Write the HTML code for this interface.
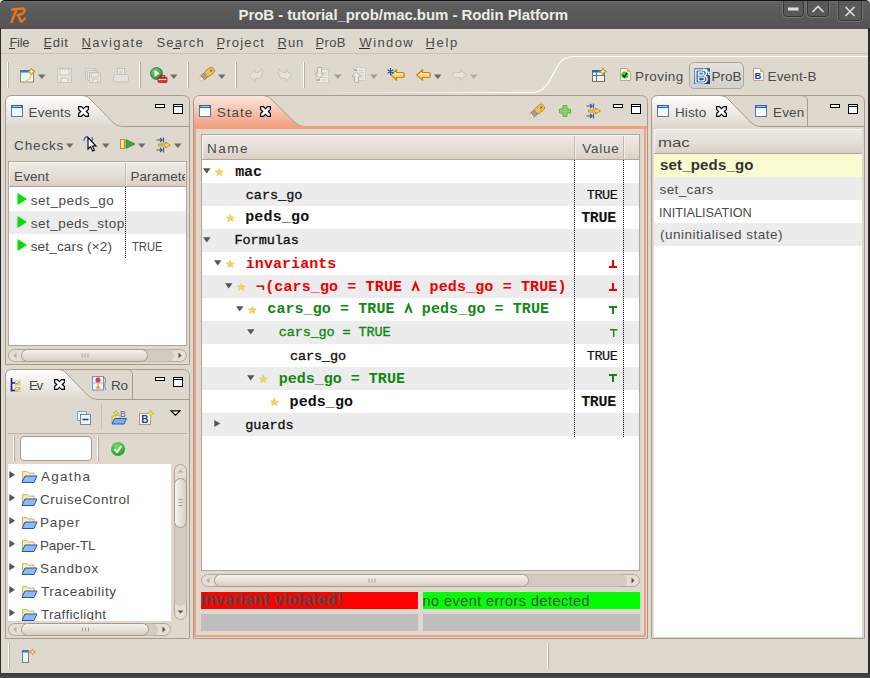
<!DOCTYPE html>
<html><head><meta charset="utf-8">
<style>
*{margin:0;padding:0;box-sizing:border-box}
html,body{width:870px;height:678px;overflow:hidden;background:#dfd8cf;font-family:"Liberation Sans",sans-serif;font-size:13px;color:#3c3c3c;position:relative}
.a{position:absolute}
.t{position:absolute;white-space:nowrap;line-height:1}
svg{display:block}
</style></head><body>
<div class="a" style="left:0px;top:0px;width:870px;height:29px;background:linear-gradient(#606060,#5a5a5a 40%,#525252);border-top:1px solid #111;border-radius:5px 5px 0 0"></div>
<div class="a" style="left:4px;top:1px;width:862px;height:1px;background:#6e6e6e"></div>
<div class="a" style="left:0px;top:28px;width:1px;height:650px;background:#2a2a2a"></div>
<div class="a" style="left:868px;top:28px;width:2px;height:650px;background:#2a2a2a"></div>
<div class="a" style="left:0px;top:673px;width:870px;height:5px;background:linear-gradient(#3a3a3a,#4a4a4a)"></div>
<svg class="a" style="left:782px;top:1px" width="23" height="17" viewBox="0 0 23 17"><rect x="0.5" y="-4" width="22" height="20.5" rx="4" fill="#5a5a5a" stroke="#767676"/><path d="M1.5 0 V12.5 Q1.5 15.5 4.5 15.5 H18.5 Q21.5 15.5 21.5 12.5 V0" fill="none" stroke="#363636"/><rect x="6" y="6.5" width="10.5" height="3" fill="#e0e0e0"/></svg>
<svg class="a" style="left:806px;top:1px" width="24" height="17" viewBox="0 0 24 17"><rect x="0.5" y="-4" width="23" height="20.5" rx="4" fill="#5a5a5a" stroke="#767676"/><path d="M1.5 0 V12.5 Q1.5 15.5 4.5 15.5 H19.5 Q22.5 15.5 22.5 12.5 V0" fill="none" stroke="#363636"/><path d="M6.5 11 L12 5.5 L17.5 11" fill="none" stroke="#e0e0e0" stroke-width="1.6"/></svg>
<svg class="a" style="left:837px;top:1px" width="26" height="21" viewBox="0 0 26 21"><rect x="0.5" y="-4" width="25" height="24.5" rx="4" fill="#5a5a5a" stroke="#767676"/><path d="M1.5 0 V16.5 Q1.5 19.5 4.5 19.5 H21.5 Q24.5 19.5 24.5 16.5 V0" fill="none" stroke="#363636"/><path d="M8.5 6 L17.5 15 M17.5 6 L8.5 15" fill="none" stroke="#e0e0e0" stroke-width="1.6"/></svg>
<svg class="a" style="left:9px;top:6px" width="18" height="19" viewBox="0 0 18 19"><path d="M3 3.5 L13 2.5 Q16.5 2.5 15.5 5.5 Q14 8.5 8.5 9.2 M7.5 3.5 L2.5 16 M9.5 9.5 L11.5 15 Q12.5 16.5 16 12.5" fill="none" stroke="#ec7417" stroke-width="2.4" stroke-linecap="round" stroke-linejoin="round"/></svg>
<div class="a" style="left:9px;top:48px;width:6px;height:1px;background:#333"></div>
<div class="a" style="left:44px;top:48px;width:7px;height:1px;background:#333"></div>
<div class="a" style="left:82px;top:48px;width:9px;height:1px;background:#333"></div>
<div class="a" style="left:173px;top:48px;width:7px;height:1px;background:#333"></div>
<div class="a" style="left:217px;top:48px;width:7px;height:1px;background:#333"></div>
<div class="a" style="left:278px;top:48px;width:8px;height:1px;background:#333"></div>
<div class="a" style="left:316px;top:48px;width:7px;height:1px;background:#333"></div>
<div class="a" style="left:359px;top:48px;width:11px;height:1px;background:#333"></div>
<div class="a" style="left:426px;top:48px;width:8px;height:1px;background:#333"></div>
<div class="a" style="left:1px;top:53px;width:867px;height:1px;background:#c9bfb3"></div>
<svg class="a" style="left:1px;top:54px" width="867" height="41" viewBox="0 0 867 41"><defs><linearGradient id="wl" gradientUnits="userSpaceOnUse" x1="310" y1="0" x2="520" y2="0"><stop offset="0" stop-color="#fff" stop-opacity="0"/><stop offset="1" stop-color="#fff"/></linearGradient></defs><path d="M0 38.5 L533 38.5 C540 38 545 33, 549 26 L556 13 C560 6, 565 2.5, 572 2.5 L867 2.5" fill="none" stroke="url(#wl)" stroke-width="1.2"/></svg>
<div class="a" style="left:7px;top:62px;width:1px;height:26px;background:#fff"></div>
<div class="a" style="left:8px;top:62px;width:1px;height:26px;background:#b9ad9f"></div>
<div class="a" style="left:139px;top:62px;width:1px;height:26px;background:#fff"></div>
<div class="a" style="left:140px;top:62px;width:1px;height:26px;background:#b9ad9f"></div>
<div class="a" style="left:187px;top:62px;width:1px;height:26px;background:#fff"></div>
<div class="a" style="left:188px;top:62px;width:1px;height:26px;background:#b9ad9f"></div>
<div class="a" style="left:235px;top:62px;width:1px;height:26px;background:#fff"></div>
<div class="a" style="left:236px;top:62px;width:1px;height:26px;background:#b9ad9f"></div>
<div class="a" style="left:303px;top:62px;width:1px;height:26px;background:#fff"></div>
<div class="a" style="left:304px;top:62px;width:1px;height:26px;background:#b9ad9f"></div>
<svg class="a" style="left:5px;top:95px" width="185" height="270" viewBox="0 0 185 270"><defs><linearGradient id="g5_95" x1="0" y1="0" x2="0" y2="1"><stop offset="0" stop-color="#ffffff"/><stop offset="1" stop-color="#dfd8cf"/></linearGradient></defs><path d="M0.5 31.5 L0.5 7 Q0.5 0.5 7 0.5 L75 0.5 C80 0.5 83 1.5 86 5 L106 25.5 C110 30.0 114 31.5 119 31.5 Z" fill="url(#g5_95)"/><path d="M0.5 269.5 L0.5 7 Q0.5 0.5 7 0.5 L177.5 0.5 Q184.5 0.5 184.5 7 L184.5 269.5 L0.5 269.5" fill="none" stroke="#a99b8c"/><path d="M75 0.5 C80 0.5 83 1.5 86 5 L106 25.5 C110 30.0 114 31.5 119 31.5 L184.5 31.5" fill="none" stroke="#a99b8c"/></svg>
<svg class="a" style="left:5px;top:369px" width="185" height="270" viewBox="0 0 185 270"><defs><linearGradient id="g5_369" x1="0" y1="0" x2="0" y2="1"><stop offset="0" stop-color="#ffffff"/><stop offset="1" stop-color="#dfd8cf"/></linearGradient></defs><path d="M0.5 30.5 L0.5 7 Q0.5 0.5 7 0.5 L51 0.5 C56 0.5 59 1.5 62 5 L81 24.5 C85 29.0 89 30.5 94 30.5 Z" fill="url(#g5_369)"/><path d="M0.5 269.5 L0.5 7 Q0.5 0.5 7 0.5 L177.5 0.5 Q184.5 0.5 184.5 7 L184.5 269.5 L0.5 269.5" fill="none" stroke="#a99b8c"/><path d="M51 0.5 C56 0.5 59 1.5 62 5 L81 24.5 C85 29.0 89 30.5 94 30.5 L184.5 30.5" fill="none" stroke="#a99b8c"/><path d="M127.5 30.5 L127.5 6 Q127.5 0.5 121.5 0.5" fill="none" stroke="#a99b8c"/></svg>
<svg class="a" style="left:193px;top:95px" width="455" height="544" viewBox="0 0 455 544"><defs><linearGradient id="g193_95" x1="0" y1="0" x2="0" y2="1"><stop offset="0" stop-color="#fbe8df"/><stop offset="1" stop-color="#f2a181"/></linearGradient></defs><path d="M0.5 31.5 L0.5 7 Q0.5 0.5 7 0.5 L68 0.5 C73 0.5 76 1.5 79 5 L100 25.5 C104 30.0 108 31.5 113 31.5 Z" fill="url(#g193_95)"/><path d="M0.5 543.5 L0.5 7 Q0.5 0.5 7 0.5 L447.5 0.5 Q454.5 0.5 454.5 7 L454.5 543.5 L0.5 543.5" fill="none" stroke="#a99b8c"/><path d="M68 0.5 C73 0.5 76 1.5 79 5 L100 25.5 C104 30.0 108 31.5 113 31.5 L454.5 31.5" fill="none" stroke="#a99b8c"/><path d="M2 31.5 L2 541 L452 541 L452 31.5" fill="none" stroke="#f3a07e" stroke-width="2"/><rect x="1" y="31.0" width="453" height="3" fill="#f3a07e"/></svg>
<svg class="a" style="left:651px;top:95px" width="214" height="544" viewBox="0 0 214 544"><defs><linearGradient id="g651_95" x1="0" y1="0" x2="0" y2="1"><stop offset="0" stop-color="#ffffff"/><stop offset="1" stop-color="#dfd8cf"/></linearGradient></defs><path d="M0.5 31.5 L0.5 7 Q0.5 0.5 7 0.5 L67 0.5 C72 0.5 75 1.5 78 5 L98 25.5 C102 30.0 106 31.5 111 31.5 Z" fill="url(#g651_95)"/><path d="M0.5 543.5 L0.5 7 Q0.5 0.5 7 0.5 L206.5 0.5 Q213.5 0.5 213.5 7 L213.5 543.5 L0.5 543.5" fill="none" stroke="#a99b8c"/><path d="M67 0.5 C72 0.5 75 1.5 78 5 L98 25.5 C102 30.0 106 31.5 111 31.5 L213.5 31.5" fill="none" stroke="#a99b8c"/><path d="M156.5 31.5 L156.5 6 Q156.5 0.5 150.5 0.5" fill="none" stroke="#a99b8c"/></svg>
<div class="a" style="left:8px;top:161px;width:179px;height:185px;background:#fff;border:1px solid #b3a699"></div>
<div class="a" style="left:9px;top:162px;width:177px;height:25px;background:linear-gradient(#eeeae5,#e3ddd5 60%,#d9d1c7);border-bottom:1px solid #b3a699;box-shadow:inset 1px 1px #f8f6f3"></div>
<div class="a" style="left:125px;top:163px;width:1px;height:23px;background:#c4b9ac"></div>
<div class="a" style="left:126px;top:163px;width:1px;height:23px;background:#f3f0ec"></div>
<div class="a" style="left:9px;top:211px;width:177px;height:23px;background:#ececec"></div>
<div class="a" style="left:125px;top:187px;width:1px;height:71px;background:repeating-linear-gradient(#000 0 1px,transparent 1px 2px)"></div>
<svg class="a" style="left:8px;top:349px" width="179" height="13" viewBox="0 0 179 13"><rect x="0.5" y="0.5" width="178" height="12" rx="6" fill="#e4ded7" stroke="#b3a699"/><rect x="13" y="0.5" width="153" height="12" rx="6" fill="#d3cac0" stroke="none"/><defs><linearGradient id="th8_349" x1="0" y1="0" x2="0" y2="1"><stop offset="0" stop-color="#f7f4f1"/><stop offset="1" stop-color="#d6cdc3"/></linearGradient></defs><rect x="13.5" y="0.5" width="126" height="12" rx="6" fill="url(#th8_349)" stroke="#a99b8c"/><path d="M74.0 4.5 v4 M77.0 4.5 v4 M80.0 4.5 v4" stroke="#a99b8c" stroke-width="1"/><path d="M8.5 3.5 L5.5 6.5 L8.5 9.5 Z" fill="#b9b1a8"/><path d="M170.5 3.5 L173.5 6.5 L170.5 9.5 Z" fill="#555"/></svg>
<div class="a" style="left:8px;top:433px;width:179px;height:1px;background:#bfb3a6"></div>
<div class="a" style="left:20px;top:436px;width:72px;height:25px;background:#fff;border:1px solid #a99b8c;border-radius:4px"></div>
<div class="a" style="left:13px;top:436px;width:1px;height:26px;background:#fff"></div>
<div class="a" style="left:14px;top:436px;width:1px;height:26px;background:#b9ad9f"></div>
<div class="a" style="left:97px;top:436px;width:1px;height:26px;background:#fff"></div>
<div class="a" style="left:98px;top:436px;width:1px;height:26px;background:#b9ad9f"></div>
<div class="a" style="left:8px;top:464px;width:163px;height:157px;background:#fff"></div>
<svg class="a" style="left:8px;top:623px" width="163" height="13" viewBox="0 0 163 13"><rect x="0.5" y="0.5" width="162" height="12" rx="6" fill="#e4ded7" stroke="#b3a699"/><rect x="13" y="0.5" width="137" height="12" rx="6" fill="#d3cac0" stroke="none"/><defs><linearGradient id="th8_623" x1="0" y1="0" x2="0" y2="1"><stop offset="0" stop-color="#f7f4f1"/><stop offset="1" stop-color="#d6cdc3"/></linearGradient></defs><rect x="13.5" y="0.5" width="127" height="12" rx="6" fill="url(#th8_623)" stroke="#a99b8c"/><path d="M74.5 4.5 v4 M77.5 4.5 v4 M80.5 4.5 v4" stroke="#a99b8c" stroke-width="1"/><path d="M8.5 3.5 L5.5 6.5 L8.5 9.5 Z" fill="#b9b1a8"/><path d="M154.5 3.5 L157.5 6.5 L154.5 9.5 Z" fill="#555"/></svg>
<svg class="a" style="left:174px;top:464px" width="13" height="156" viewBox="0 0 13 156"><rect x="0.5" y="0.5" width="12" height="155" rx="6" fill="#e4ded7" stroke="#b3a699"/><rect x="0.5" y="14" width="12" height="128" rx="6" fill="#d3cac0"/><defs><linearGradient id="vth" x1="0" y1="0" x2="1" y2="0"><stop offset="0" stop-color="#f7f4f1"/><stop offset="1" stop-color="#d6cdc3"/></linearGradient></defs><rect x="0.5" y="14.5" width="12" height="49" rx="6" fill="url(#vth)" stroke="#a99b8c"/><path d="M4.5 35.5 h4 M4.5 38.5 h4 M4.5 41.5 h4" stroke="#a99b8c"/><path d="M3.5 8.5 L6.5 5.5 L9.5 8.5 Z" fill="#b9b1a8"/><path d="M3.5 146.5 L6.5 149.5 L9.5 146.5 Z" fill="#555"/></svg>
<div class="a" style="left:201px;top:134px;width:439px;height:437px;background:#fff;border:1px solid #b3a699"></div>
<div class="a" style="left:202px;top:135px;width:437px;height:25px;background:linear-gradient(#eeeae5,#e3ddd5 60%,#d9d1c7);border-bottom:1px solid #b3a699;box-shadow:inset 1px 1px #f8f6f3"></div>
<div class="a" style="left:574px;top:136px;width:1px;height:23px;background:#c4b9ac"></div>
<div class="a" style="left:575px;top:136px;width:1px;height:23px;background:#f3f0ec"></div>
<div class="a" style="left:623px;top:136px;width:1px;height:23px;background:#c4b9ac"></div>
<div class="a" style="left:624px;top:136px;width:1px;height:23px;background:#f3f0ec"></div>
<div class="a" style="left:202px;top:183px;width:437px;height:23px;background:#ececec"></div>
<div class="a" style="left:202px;top:229px;width:437px;height:23px;background:#ececec"></div>
<div class="a" style="left:202px;top:275px;width:437px;height:23px;background:#ececec"></div>
<div class="a" style="left:202px;top:321px;width:437px;height:23px;background:#ececec"></div>
<div class="a" style="left:202px;top:367px;width:437px;height:23px;background:#ececec"></div>
<div class="a" style="left:202px;top:413px;width:437px;height:23px;background:#ececec"></div>
<div class="a" style="left:574px;top:160px;width:1px;height:277px;background:repeating-linear-gradient(#000 0 1px,transparent 1px 2px)"></div>
<div class="a" style="left:623px;top:160px;width:1px;height:277px;background:repeating-linear-gradient(#000 0 1px,transparent 1px 2px)"></div>
<svg class="a" style="left:201px;top:574px" width="439" height="13" viewBox="0 0 439 13"><rect x="0.5" y="0.5" width="438" height="12" rx="6" fill="#e4ded7" stroke="#b3a699"/><rect x="13" y="0.5" width="413" height="12" rx="6" fill="#d3cac0" stroke="none"/><defs><linearGradient id="th201_574" x1="0" y1="0" x2="0" y2="1"><stop offset="0" stop-color="#f7f4f1"/><stop offset="1" stop-color="#d6cdc3"/></linearGradient></defs><rect x="13.5" y="0.5" width="314" height="12" rx="6" fill="url(#th201_574)" stroke="#a99b8c"/><path d="M168.0 4.5 v4 M171.0 4.5 v4 M174.0 4.5 v4" stroke="#a99b8c" stroke-width="1"/><path d="M8.5 3.5 L5.5 6.5 L8.5 9.5 Z" fill="#b9b1a8"/><path d="M430.5 3.5 L433.5 6.5 L430.5 9.5 Z" fill="#555"/></svg>
<div class="a" style="left:201px;top:592px;width:217px;height:17px;background:#ff0000"></div>
<div class="a" style="left:423px;top:592px;width:217px;height:17px;background:#00ff00"></div>
<div class="a" style="left:201px;top:614px;width:217px;height:17px;background:#bebebe"></div>
<div class="a" style="left:423px;top:614px;width:217px;height:17px;background:#bebebe"></div>
<div class="a" style="left:654px;top:129px;width:208px;height:508px;background:#fff"></div>
<div class="a" style="left:654px;top:129px;width:208px;height:25px;background:linear-gradient(#eeeae5,#e3ddd5 60%,#d9d1c7);border-bottom:1px solid #b3a699;box-shadow:inset 1px 1px #f8f6f3"></div>
<div class="a" style="left:654px;top:154px;width:208px;height:23px;background:#fbfbd2"></div>
<div class="a" style="left:654px;top:177px;width:208px;height:23px;background:#ececec"></div>
<div class="a" style="left:654px;top:223px;width:208px;height:23px;background:#ececec"></div>
<svg class="a" style="left:203px;top:167.6px" width="9" height="7" viewBox="0 0 9 7"><path d="M0 0.3 L7.5 0.3 L3.75 5.5 Z" fill="#555"/></svg>
<svg class="a" style="left:215px;top:168px" width="9" height="8" viewBox="0 0 9 8"><path d="M4.3 0.3 L5.4 2.9 L8.3 3 L6 4.8 L6.9 7.6 L4.3 6 L1.7 7.6 L2.6 4.8 L0.3 3 L3.2 2.9 Z" fill="#f2d65a" stroke="#e0bc3a" stroke-width="0.5"/></svg>
<svg class="a" style="left:226px;top:214px" width="9" height="8" viewBox="0 0 9 8"><path d="M4.3 0.3 L5.4 2.9 L8.3 3 L6 4.8 L6.9 7.6 L4.3 6 L1.7 7.6 L2.6 4.8 L0.3 3 L3.2 2.9 Z" fill="#f2d65a" stroke="#e0bc3a" stroke-width="0.5"/></svg>
<svg class="a" style="left:203px;top:236.6px" width="9" height="7" viewBox="0 0 9 7"><path d="M0 0.3 L7.5 0.3 L3.75 5.5 Z" fill="#555"/></svg>
<svg class="a" style="left:214px;top:259.6px" width="9" height="7" viewBox="0 0 9 7"><path d="M0 0.3 L7.5 0.3 L3.75 5.5 Z" fill="#555"/></svg>
<svg class="a" style="left:226px;top:260px" width="9" height="8" viewBox="0 0 9 8"><path d="M4.3 0.3 L5.4 2.9 L8.3 3 L6 4.8 L6.9 7.6 L4.3 6 L1.7 7.6 L2.6 4.8 L0.3 3 L3.2 2.9 Z" fill="#f2d65a" stroke="#e0bc3a" stroke-width="0.5"/></svg>
<svg class="a" style="left:225px;top:282.6px" width="9" height="7" viewBox="0 0 9 7"><path d="M0 0.3 L7.5 0.3 L3.75 5.5 Z" fill="#555"/></svg>
<svg class="a" style="left:237px;top:283px" width="9" height="8" viewBox="0 0 9 8"><path d="M4.3 0.3 L5.4 2.9 L8.3 3 L6 4.8 L6.9 7.6 L4.3 6 L1.7 7.6 L2.6 4.8 L0.3 3 L3.2 2.9 Z" fill="#f2d65a" stroke="#e0bc3a" stroke-width="0.5"/></svg>
<svg class="a" style="left:236px;top:305.6px" width="9" height="7" viewBox="0 0 9 7"><path d="M0 0.3 L7.5 0.3 L3.75 5.5 Z" fill="#555"/></svg>
<svg class="a" style="left:248px;top:306px" width="9" height="8" viewBox="0 0 9 8"><path d="M4.3 0.3 L5.4 2.9 L8.3 3 L6 4.8 L6.9 7.6 L4.3 6 L1.7 7.6 L2.6 4.8 L0.3 3 L3.2 2.9 Z" fill="#f2d65a" stroke="#e0bc3a" stroke-width="0.5"/></svg>
<svg class="a" style="left:247px;top:328.6px" width="9" height="7" viewBox="0 0 9 7"><path d="M0 0.3 L7.5 0.3 L3.75 5.5 Z" fill="#555"/></svg>
<svg class="a" style="left:247px;top:374.6px" width="9" height="7" viewBox="0 0 9 7"><path d="M0 0.3 L7.5 0.3 L3.75 5.5 Z" fill="#555"/></svg>
<svg class="a" style="left:259px;top:375px" width="9" height="8" viewBox="0 0 9 8"><path d="M4.3 0.3 L5.4 2.9 L8.3 3 L6 4.8 L6.9 7.6 L4.3 6 L1.7 7.6 L2.6 4.8 L0.3 3 L3.2 2.9 Z" fill="#f2d65a" stroke="#e0bc3a" stroke-width="0.5"/></svg>
<svg class="a" style="left:270px;top:398px" width="9" height="8" viewBox="0 0 9 8"><path d="M4.3 0.3 L5.4 2.9 L8.3 3 L6 4.8 L6.9 7.6 L4.3 6 L1.7 7.6 L2.6 4.8 L0.3 3 L3.2 2.9 Z" fill="#f2d65a" stroke="#e0bc3a" stroke-width="0.5"/></svg>
<svg class="a" style="left:214px;top:420.4px" width="7" height="8" viewBox="0 0 7 8"><path d="M0.3 0 L6.3 3.5 L0.3 7 Z" fill="#555"/></svg>
<svg class="a" style="left:608.5px;top:260.2px" width="8" height="8" viewBox="0 0 8 8"><path d="M4 0 V7 M0 7 H8" fill="none" stroke="#ee0000" stroke-width="2"/></svg>
<svg class="a" style="left:608.5px;top:283px" width="8" height="8" viewBox="0 0 8 8"><path d="M4 0 V7 M0 7 H8" fill="none" stroke="#ee0000" stroke-width="2"/></svg>
<svg class="a" style="left:608.5px;top:305.6px" width="8" height="8" viewBox="0 0 8 8"><path d="M0 1 H8 M4 1 V8" fill="none" stroke="#118811" stroke-width="2"/></svg>
<svg class="a" style="left:610px;top:329px" width="8" height="8" viewBox="0 0 8 8"><path d="M0 0.7 H7.4 M3.7 0.7 V8" fill="none" stroke="#118811" stroke-width="1.4"/></svg>
<svg class="a" style="left:608.5px;top:374.4px" width="8" height="8" viewBox="0 0 8 8"><path d="M0 1 H8 M4 1 V8" fill="none" stroke="#118811" stroke-width="2"/></svg>
<svg class="a" style="left:11px;top:105px" width="12" height="12" viewBox="0 0 12 12"><defs><linearGradient id="vi11_105" x1="0" y1="0" x2="0" y2="1"><stop offset="0" stop-color="#dff4fb"/><stop offset="1" stop-color="#ffffff"/></linearGradient></defs><rect x="0.5" y="0.5" width="11" height="11" fill="url(#vi11_105)" stroke="#5a78a0"/><rect x="0" y="0" width="12" height="3" fill="#2a66b8"/><rect x="1.5" y="1" width="9" height="1" fill="#9cc6f0"/></svg>
<svg class="a" style="left:78px;top:106px" width="11" height="11" viewBox="0 0 11 11"><path d="M0.6 0.6 H3.4 L5.5 2.7 L7.6 0.6 H10.4 V3.4 L8.3 5.5 L10.4 7.6 V10.4 H7.6 L5.5 8.3 L3.4 10.4 H0.6 V7.6 L2.7 5.5 L0.6 3.4 Z" fill="#fff" stroke="#000" stroke-width="1.2"/></svg>
<svg class="a" style="left:155px;top:104px" width="10" height="4" viewBox="0 0 10 4"><rect x="0.5" y="0.5" width="9" height="3" fill="#fff" stroke="#000" stroke-width="1"/></svg>
<svg class="a" style="left:173px;top:104px" width="10" height="10" viewBox="0 0 10 10"><rect x="0.5" y="0.5" width="9" height="9" fill="#fff" stroke="#000" stroke-width="1"/><rect x="1" y="2" width="8" height="1" fill="#000"/></svg>
<svg class="a" style="left:199px;top:105px" width="12" height="12" viewBox="0 0 12 12"><defs><linearGradient id="vi199_105" x1="0" y1="0" x2="0" y2="1"><stop offset="0" stop-color="#dff4fb"/><stop offset="1" stop-color="#ffffff"/></linearGradient></defs><rect x="0.5" y="0.5" width="11" height="11" fill="url(#vi199_105)" stroke="#5a78a0"/><rect x="0" y="0" width="12" height="3" fill="#2a66b8"/><rect x="1.5" y="1" width="9" height="1" fill="#9cc6f0"/></svg>
<svg class="a" style="left:260px;top:106px" width="11" height="11" viewBox="0 0 11 11"><path d="M0.6 0.6 H3.4 L5.5 2.7 L7.6 0.6 H10.4 V3.4 L8.3 5.5 L10.4 7.6 V10.4 H7.6 L5.5 8.3 L3.4 10.4 H0.6 V7.6 L2.7 5.5 L0.6 3.4 Z" fill="#fff" stroke="#000" stroke-width="1.2"/></svg>
<svg class="a" style="left:613px;top:104px" width="10" height="4" viewBox="0 0 10 4"><rect x="0.5" y="0.5" width="9" height="3" fill="#fff" stroke="#000" stroke-width="1"/></svg>
<svg class="a" style="left:631px;top:104px" width="10" height="10" viewBox="0 0 10 10"><rect x="0.5" y="0.5" width="9" height="9" fill="#fff" stroke="#000" stroke-width="1"/><rect x="1" y="2" width="8" height="1" fill="#000"/></svg>
<svg class="a" style="left:657px;top:105px" width="12" height="12" viewBox="0 0 12 12"><defs><linearGradient id="vi657_105" x1="0" y1="0" x2="0" y2="1"><stop offset="0" stop-color="#dff4fb"/><stop offset="1" stop-color="#ffffff"/></linearGradient></defs><rect x="0.5" y="0.5" width="11" height="11" fill="url(#vi657_105)" stroke="#5a78a0"/><rect x="0" y="0" width="12" height="3" fill="#2a66b8"/><rect x="1.5" y="1" width="9" height="1" fill="#9cc6f0"/></svg>
<svg class="a" style="left:716px;top:106px" width="11" height="11" viewBox="0 0 11 11"><path d="M0.6 0.6 H3.4 L5.5 2.7 L7.6 0.6 H10.4 V3.4 L8.3 5.5 L10.4 7.6 V10.4 H7.6 L5.5 8.3 L3.4 10.4 H0.6 V7.6 L2.7 5.5 L0.6 3.4 Z" fill="#fff" stroke="#000" stroke-width="1.2"/></svg>
<svg class="a" style="left:755px;top:105px" width="12" height="12" viewBox="0 0 12 12"><defs><linearGradient id="vi755_105" x1="0" y1="0" x2="0" y2="1"><stop offset="0" stop-color="#dff4fb"/><stop offset="1" stop-color="#ffffff"/></linearGradient></defs><rect x="0.5" y="0.5" width="11" height="11" fill="url(#vi755_105)" stroke="#5a78a0"/><rect x="0" y="0" width="12" height="3" fill="#2a66b8"/><rect x="1.5" y="1" width="9" height="1" fill="#9cc6f0"/></svg>
<svg class="a" style="left:830px;top:104px" width="10" height="4" viewBox="0 0 10 4"><rect x="0.5" y="0.5" width="9" height="3" fill="#fff" stroke="#000" stroke-width="1"/></svg>
<svg class="a" style="left:848px;top:104px" width="10" height="10" viewBox="0 0 10 10"><rect x="0.5" y="0.5" width="9" height="9" fill="#fff" stroke="#000" stroke-width="1"/><rect x="1" y="2" width="8" height="1" fill="#000"/></svg>
<svg class="a" style="left:54px;top:379px" width="11" height="11" viewBox="0 0 11 11"><path d="M0.6 0.6 H3.4 L5.5 2.7 L7.6 0.6 H10.4 V3.4 L8.3 5.5 L10.4 7.6 V10.4 H7.6 L5.5 8.3 L3.4 10.4 H0.6 V7.6 L2.7 5.5 L0.6 3.4 Z" fill="#fff" stroke="#000" stroke-width="1.2"/></svg>
<svg class="a" style="left:155px;top:377px" width="10" height="4" viewBox="0 0 10 4"><rect x="0.5" y="0.5" width="9" height="3" fill="#fff" stroke="#000" stroke-width="1"/></svg>
<svg class="a" style="left:173px;top:377px" width="10" height="10" viewBox="0 0 10 10"><rect x="0.5" y="0.5" width="9" height="9" fill="#fff" stroke="#000" stroke-width="1"/><rect x="1" y="2" width="8" height="1" fill="#000"/></svg>
<svg class="a" style="left:10px;top:378px" width="11" height="14" viewBox="0 0 11 14"><path d="M1.5 0 V13.5 M1.5 5 H5 M1.5 12.5 H5" stroke="#1a1aa0" stroke-width="1.6" fill="none"/><rect x="5.5" y="3" width="4.5" height="4" fill="#fff6d0" stroke="#e0b050" stroke-width="0.8"/><rect x="5.5" y="9.5" width="4.5" height="4" fill="#fff6d0" stroke="#e0b050" stroke-width="0.8"/><path d="M6.3 5 L7.3 6.2 L9.5 3.6 M6.3 11.5 L7.3 12.7 L9.5 10.1" stroke="#2a9a2a" stroke-width="0.9" fill="none"/></svg>
<svg class="a" style="left:92px;top:376px" width="15" height="15" viewBox="0 0 15 15"><rect x="0.5" y="0.5" width="11" height="13.5" fill="#f4f7fa" stroke="#7c8ea4"/><path d="M0.5 7 H11.5 M6 0.5 V14" stroke="#9fb0c0"/><circle cx="6" cy="4" r="2.6" fill="#e03a3a"/><path d="M3.5 12.5 L6 8.5 L8.5 12.5 Z" fill="#f0a030"/><path d="M11.5 1 Q14.5 2 13 7 Q12 11 14 14" fill="none" stroke="#7c8ea4"/></svg>
<svg class="a" style="left:20px;top:68px" width="15" height="15" viewBox="0 0 15 15"><defs><linearGradient id="nw" x1="0" y1="0" x2="1" y2="1"><stop offset="0" stop-color="#cfeefc"/><stop offset="1" stop-color="#ffffff"/></linearGradient></defs><rect x="0.5" y="2.5" width="13" height="11.5" fill="url(#nw)" stroke="#9c8a50"/><rect x="0" y="2" width="10" height="2.5" fill="#3a78c8"/><path d="M11.5 3 Q12 11 5 13.5" fill="none" stroke="#f0c840" stroke-width="1.2"/><path d="M11.5 0 L12.6 2.4 L15 3.5 L12.6 4.6 L11.5 7 L10.4 4.6 L8 3.5 L10.4 2.4 Z" fill="#fff3a0" stroke="#b88a10" stroke-width="0.9"/></svg>
<svg class="a" style="left:38px;top:74px" width="8" height="6" viewBox="0 0 8 6"><path d="M0 0.5 L7.5 0.5 L3.75 5 Z" fill="#6e6e6e"/></svg>
<svg class="a" style="left:57px;top:68px" width="15" height="15" viewBox="0 0 15 15"><path d="M0.5 0.5 H14.5 V14.5 H0.5 Z" fill="#e6e1dc" stroke="#c9c2ba"/><rect x="3" y="1" width="9" height="6" fill="#efebe7" stroke="#c9c2ba" stroke-width="0.8"/><rect x="4" y="10" width="7" height="4.5" fill="#efebe7" stroke="#c9c2ba" stroke-width="0.8"/></svg>
<svg class="a" style="left:85px;top:68px" width="16" height="15" viewBox="0 0 16 15"><path d="M0.5 0.5 H10.5 V10.5 H0.5 Z" fill="#e6e1dc" stroke="#c9c2ba"/><path d="M2.5 2.5 H12.5 V12.5 H2.5 Z" fill="#e6e1dc" stroke="#c9c2ba"/><path d="M4.5 4.5 H15.5 V14.5 H4.5 Z" fill="#e6e1dc" stroke="#c9c2ba"/><rect x="6.5" y="5" width="7" height="4" fill="#efebe7" stroke="#c9c2ba" stroke-width="0.8"/><rect x="7.5" y="11" width="5" height="3.5" fill="#efebe7" stroke="#c9c2ba" stroke-width="0.8"/></svg>
<svg class="a" style="left:113px;top:68px" width="16" height="15" viewBox="0 0 16 15"><rect x="4.5" y="0.5" width="7" height="7" fill="#efebe7" stroke="#c9c2ba"/><path d="M6 3 H10 M6 5 H10" stroke="#c9c2ba"/><rect x="0.5" y="6.5" width="15" height="7.5" rx="2" fill="#e6e1dc" stroke="#c9c2ba"/></svg>
<svg class="a" style="left:150px;top:67px" width="18" height="16" viewBox="0 0 18 16"><defs><radialGradient id="rg" cx="0.4" cy="0.35" r="0.7"><stop offset="0" stop-color="#7fd27f"/><stop offset="1" stop-color="#1f8a2f"/></radialGradient></defs><circle cx="6.5" cy="6.5" r="6" fill="url(#rg)" stroke="#2a7a2a" stroke-width="0.8"/><path d="M4.5 3 L9.5 6.5 L4.5 10 Z" fill="#fff"/><rect x="8" y="10" width="9" height="5.5" rx="1" fill="#d83a3a" stroke="#b02020" stroke-width="0.8"/><rect x="10.5" y="8.5" width="4" height="2" fill="none" stroke="#b02020" stroke-width="0.8"/><path d="M8.5 12.5 H16.5" stroke="#fff" stroke-width="0.8"/></svg>
<svg class="a" style="left:170px;top:74px" width="8" height="6" viewBox="0 0 8 6"><path d="M0 0.5 L7.5 0.5 L3.75 5 Z" fill="#6e6e6e"/></svg>
<svg class="a" style="left:198px;top:66px" width="18" height="16" viewBox="0 0 18 16"><g transform="translate(0 1) rotate(-40 8.5 7.5)"><path d="M-0.5 7.5 L3.5 4.8 V10.2 Z" fill="#fffbd0" stroke="#e8c050" stroke-width="0.7"/><rect x="3.5" y="4.8" width="4" height="5.4" fill="#a4a4aa" stroke="#6a6a70" stroke-width="0.7"/><rect x="7.5" y="4.3" width="10" height="6.4" rx="2" fill="#f4bc50" stroke="#b87a18" stroke-width="0.8"/><circle cx="14.5" cy="7.5" r="0.9" fill="#2a4aa0"/></g></svg>
<svg class="a" style="left:218px;top:74px" width="8" height="6" viewBox="0 0 8 6"><path d="M0 0.5 L7.5 0.5 L3.75 5 Z" fill="#6e6e6e"/></svg>
<svg class="a" style="left:249px;top:68px" width="15" height="15" viewBox="0 0 15 15"><path d="M0.5 7.5 L6 1.5 V4.5 Q9 5 11.5 3 Q12.5 1.5 13 0.5 Q15 5 12 9 Q9 11 6 10.5 V13.5 Z" fill="#e6e1dc" stroke="#c9c2ba"/></svg>
<svg class="a" style="left:277px;top:68px" width="15" height="15" viewBox="0 0 15 15"><path d="M14.5 7.5 L9 1.5 V4.5 Q6 5 3.5 3 Q2.5 1.5 2 0.5 Q0 5 3 9 Q6 11 9 10.5 V13.5 Z" fill="#e6e1dc" stroke="#c9c2ba"/></svg>
<svg class="a" style="left:314px;top:67px" width="16" height="16" viewBox="0 0 16 16"><rect x="2.5" y="2.5" width="12" height="13" fill="#ece8e3" stroke="#d3ccc4"/><path d="M6 5.5 H13 M8 8 H13 M6 10.5 H13 M8 13 H13" stroke="#d6d0c9"/><rect x="3" y="12" width="3" height="2" fill="#b5aea6"/><path d="M3.5 0.5 H7.5 V6.5 H10 L5.5 11.5 L1 6.5 H3.5 Z" fill="#ebe7e2" stroke="#bdb5ac"/></svg>
<svg class="a" style="left:334px;top:74px" width="8" height="6" viewBox="0 0 8 6"><path d="M0 0.5 L7.5 0.5 L3.75 5 Z" fill="#a89c8e"/></svg>
<svg class="a" style="left:351px;top:67px" width="16" height="16" viewBox="0 0 16 16"><rect x="2.5" y="0.5" width="12" height="13" fill="#ece8e3" stroke="#d3ccc4"/><path d="M6 3.5 H13 M8 6 H13 M6 8.5 H13 M8 11 H13" stroke="#d6d0c9"/><rect x="3" y="2" width="3" height="2" fill="#b5aea6"/><path d="M3.5 15.5 H7.5 V9.5 H10 L5.5 4.5 L1 9.5 H3.5 Z" fill="#ebe7e2" stroke="#bdb5ac"/></svg>
<svg class="a" style="left:370px;top:74px" width="8" height="6" viewBox="0 0 8 6"><path d="M0 0.5 L7.5 0.5 L3.75 5 Z" fill="#a89c8e"/></svg>
<svg class="a" style="left:390px;top:69px" width="15" height="12" viewBox="0 0 15 12"><defs><linearGradient id="ya" x1="0" y1="0" x2="0" y2="1"><stop offset="0" stop-color="#fff8d0"/><stop offset="1" stop-color="#f2c040"/></linearGradient></defs><path d="M0.8 6 L6.5 0.8 V3.5 H12.5 Q14.3 3.5 14.3 6 Q14.3 8.5 12.5 8.5 H6.5 V11.2 Z" fill="url(#ya)" stroke="#c8860a" stroke-width="1.2"/></svg>
<svg class="a" style="left:387px;top:68px" width="7" height="7" viewBox="0 0 7 7"><path d="M3.5 0 V7 M0.5 1.8 L6.5 5.2 M6.5 1.8 L0.5 5.2" stroke="#2050a8" stroke-width="1.1"/></svg>
<svg class="a" style="left:416px;top:69px" width="15" height="12" viewBox="0 0 15 12"><defs><linearGradient id="ya" x1="0" y1="0" x2="0" y2="1"><stop offset="0" stop-color="#fff8d0"/><stop offset="1" stop-color="#f2c040"/></linearGradient></defs><path d="M0.8 6 L6.5 0.8 V3.5 H12.5 Q14.3 3.5 14.3 6 Q14.3 8.5 12.5 8.5 H6.5 V11.2 Z" fill="url(#ya)" stroke="#c8860a" stroke-width="1.2"/></svg>
<svg class="a" style="left:434px;top:73.5px" width="8" height="6" viewBox="0 0 8 6"><path d="M0 0.5 L7.5 0.5 L3.75 5 Z" fill="#666"/></svg>
<svg class="a" style="left:452px;top:69px" width="15" height="12" viewBox="0 0 15 12"><defs><linearGradient id="ya" x1="0" y1="0" x2="0" y2="1"><stop offset="0" stop-color="#fff8d0"/><stop offset="1" stop-color="#f2c040"/></linearGradient></defs><path transform="translate(15 0) scale(-1 1)" d="M0.8 6 L6.5 0.8 V3.5 H12.5 Q14.3 3.5 14.3 6 Q14.3 8.5 12.5 8.5 H6.5 V11.2 Z" fill="#e9e4df" stroke="#cdc6be" stroke-width="1.2"/></svg>
<svg class="a" style="left:470px;top:73.5px" width="8" height="6" viewBox="0 0 8 6"><path d="M0 0.5 L7.5 0.5 L3.75 5 Z" fill="#b9ada0"/></svg>
<svg class="a" style="left:592px;top:68px" width="15" height="14" viewBox="0 0 15 14"><rect x="0.5" y="2.5" width="12" height="11" fill="#eaf7fd" stroke="#7a7050"/><path d="M0.5 7.5 H12.5 M4.5 4.5 V13.5" stroke="#7a7050"/><rect x="0" y="2" width="9" height="2.5" fill="#2a66b8"/><path d="M11 0 L12 2.4 L14.5 3.4 L12 4.4 L11 7 L10 4.4 L7.5 3.4 L10 2.4 Z" fill="#fff4b0" stroke="#b88a10" stroke-width="0.9"/></svg>
<svg class="a" style="left:620px;top:68px" width="11" height="13" viewBox="0 0 11 13"><path d="M0.5 0.5 H7 L10.5 4 V12.5 H0.5 Z" fill="#fff" stroke="#c8a080"/><path d="M7 0.5 L10.5 4 H7 Z" fill="#f0a040"/><circle cx="4.8" cy="7" r="3.6" fill="#22dd22"/><path d="M3 7 L4.5 8.8 L7 5" stroke="#111" stroke-width="1.3" fill="none"/></svg>
<div class="a" style="left:689px;top:62px;width:55px;height:27px;background:linear-gradient(#e4e1dd,#d3cfca);border:1px solid #aba59d;border-radius:5px"></div>
<svg class="a" style="left:694px;top:68px" width="16" height="16" viewBox="0 0 16 16"><defs><linearGradient id="pb" x1="0" y1="0" x2="1" y2="1"><stop offset="0" stop-color="#6a9ccc"/><stop offset="0.5" stop-color="#2a6aa8"/><stop offset="1" stop-color="#0c3a70"/></linearGradient></defs><rect x="0" y="0" width="16" height="16" fill="url(#pb)"/><text x="0.6" y="15.2" font-family="Liberation Sans" font-weight="bold" font-size="18.5" fill="#245c98" stroke="#fff" stroke-width="1.2">B</text><path d="M9.5 0.5 L11 2.2 L12.5 1.8 L13 3.8 L15 4.3 L14.6 6 L16 7" fill="none" stroke="#fff" stroke-width="1.3"/></svg>
<svg class="a" style="left:753px;top:68px" width="11" height="13" viewBox="0 0 11 13"><path d="M0.5 0.5 H7 L10.5 4 V12.5 H0.5 Z" fill="#fff" stroke="#c8a080"/><path d="M7 0.5 L10.5 4 H7 Z" fill="#f0b040"/><text x="1.6" y="10.6" font-family="Liberation Sans" font-weight="bold" font-size="9.5" fill="#1a3aa0">B</text></svg>
<svg class="a" style="left:66px;top:143px" width="8" height="6" viewBox="0 0 8 6"><path d="M0 0.5 L7.5 0.5 L3.75 5 Z" fill="#6e6e6e"/></svg>
<svg class="a" style="left:83px;top:136px" width="15" height="16" viewBox="0 0 15 16"><path d="M1 5 Q1 0.5 5 0.8 M9 1 Q10 3 9 5" fill="none" stroke="#6a6ae0" stroke-width="1.6"/><path d="M5 1.5 L5 13 L7.6 10.6 L9.6 15 L11.4 14.2 L9.5 10 L13 10 Z" fill="#fff" stroke="#000" stroke-width="1.1"/></svg>
<svg class="a" style="left:102px;top:143px" width="8" height="6" viewBox="0 0 8 6"><path d="M0 0.5 L7.5 0.5 L3.75 5 Z" fill="#6e6e6e"/></svg>
<svg class="a" style="left:120px;top:139px" width="16" height="10" viewBox="0 0 16 10"><rect x="0.5" y="0.5" width="4" height="9" fill="#f8e890" stroke="#b89020"/><path d="M6 0.5 L15 5 L6 9.5 Z" fill="#3aa84a" stroke="#2a8a3a" stroke-width="0.8"/></svg>
<svg class="a" style="left:138px;top:143px" width="8" height="6" viewBox="0 0 8 6"><path d="M0 0.5 L7.5 0.5 L3.75 5 Z" fill="#6e6e6e"/></svg>
<svg class="a" style="left:156px;top:136.5px" width="16" height="16" viewBox="0 0 16 16"><path d="M0.5 3 H6 M4 1 L6.2 3 L4 5 M7.5 0.5 V5.5 M0.5 13 H6 M4 11 L6.2 13 L4 15 M7.5 10.5 V15.5" fill="none" stroke="#3a5a8a" stroke-width="1.1"/><path d="M2.5 7 H9.5 V5 L14.5 8 L9.5 11 V9 H2.5 Z" fill="#f6d060" stroke="#c88a10" stroke-width="0.9"/></svg>
<svg class="a" style="left:174px;top:143px" width="8" height="6" viewBox="0 0 8 6"><path d="M0 0.5 L7.5 0.5 L3.75 5 Z" fill="#6e6e6e"/></svg>
<svg class="a" style="left:528px;top:103px" width="18" height="16" viewBox="0 0 18 16"><g transform="translate(0 1) rotate(-40 8.5 7.5)"><path d="M-0.5 7.5 L3.5 4.8 V10.2 Z" fill="#fffbd0" stroke="#e8c050" stroke-width="0.7"/><rect x="3.5" y="4.8" width="4" height="5.4" fill="#a4a4aa" stroke="#6a6a70" stroke-width="0.7"/><rect x="7.5" y="4.3" width="10" height="6.4" rx="2" fill="#f4bc50" stroke="#b87a18" stroke-width="0.8"/><circle cx="14.5" cy="7.5" r="0.9" fill="#2a4aa0"/></g></svg>
<svg class="a" style="left:559px;top:105px" width="12" height="12" viewBox="0 0 12 12"><path d="M4 0.5 H8 V4 H11.5 V8 H8 V11.5 H4 V8 H0.5 V4 H4 Z" fill="#86d466" stroke="#5aa04a" stroke-width="0.8"/></svg>
<svg class="a" style="left:586px;top:103px" width="16" height="16" viewBox="0 0 16 16"><path d="M0.5 3 H6 M4 1 L6.2 3 L4 5 M7.5 0.5 V5.5 M0.5 13 H6 M4 11 L6.2 13 L4 15 M7.5 10.5 V15.5" fill="none" stroke="#3a5a8a" stroke-width="1.1"/><path d="M2.5 7 H9.5 V5 L14.5 8 L9.5 11 V9 H2.5 Z" fill="#f6d060" stroke="#c88a10" stroke-width="0.9"/></svg>
<svg class="a" style="left:77px;top:411px" width="14" height="14" viewBox="0 0 14 14"><rect x="0.5" y="0.5" width="9" height="9" fill="#e8f4fc" stroke="#8aa0b8"/><rect x="3.5" y="3.5" width="10" height="10" fill="#eef8fe" stroke="#7088a8"/><path d="M5.5 8.5 H11.5" stroke="#1a4a8a" stroke-width="1.6"/></svg>
<div class="a" style="left:101px;top:403px;width:1px;height:27px;background:#c9bfb3"></div>
<svg class="a" style="left:111px;top:410px" width="16" height="15" viewBox="0 0 16 15"><path d="M1 6 H5 L6 5 H9 V13.5 H1 Z" fill="#f0e0a0" stroke="#c0a040" stroke-width="0.8"/><path d="M1 14 L3.5 8.5 H15.5 L13 14 Z" fill="#7ab0f0" stroke="#2050a0" stroke-width="0.9"/><path d="M5 0 L5.8 2.2 L8 3 L5.8 3.8 L5 6 L4.2 3.8 L2 3 L4.2 2.2 Z" fill="#f8f040" stroke="#b0a010" stroke-width="0.6"/><text x="9" y="7.2" font-family="Liberation Sans" font-size="8.5" fill="#3a6ab0">B</text></svg>
<svg class="a" style="left:139px;top:410px" width="15" height="15" viewBox="0 0 15 15"><rect x="0.5" y="3.5" width="11" height="11" fill="#fffbe8" stroke="#b0a060"/><text x="2.2" y="12.8" font-family="Liberation Sans" font-weight="bold" font-size="10" fill="#1a3ab0">B</text><path d="M11.5 0 L12.4 2.6 L15 3.5 L12.4 4.4 L11.5 7 L10.6 4.4 L8 3.5 L10.6 2.6 Z" fill="#f8f040" stroke="#b0a010" stroke-width="0.6"/></svg>
<svg class="a" style="left:170px;top:409.5px" width="11" height="6" viewBox="0 0 11 6"><path d="M0.8 0.8 H10.2 L5.5 5.2 Z" fill="#fff" stroke="#000" stroke-width="1.2"/></svg>
<svg class="a" style="left:111px;top:442px" width="15" height="15" viewBox="0 0 15 15"><defs><radialGradient id="gc" cx="0.4" cy="0.3" r="0.8"><stop offset="0" stop-color="#70e070"/><stop offset="1" stop-color="#109a10"/></radialGradient></defs><circle cx="7" cy="7" r="7" fill="url(#gc)"/><path d="M3.5 7.2 L6 10 L10.5 3.8" stroke="#fff" stroke-width="2" fill="none"/></svg>
<svg class="a" style="left:17px;top:193px" width="11" height="12" viewBox="0 0 11 12"><path d="M0.5 0 L10 6 L0.5 12 Z" fill="#00e000"/></svg>
<svg class="a" style="left:17px;top:216px" width="11" height="12" viewBox="0 0 11 12"><path d="M0.5 0 L10 6 L0.5 12 Z" fill="#00e000"/></svg>
<svg class="a" style="left:17px;top:239px" width="11" height="12" viewBox="0 0 11 12"><path d="M0.5 0 L10 6 L0.5 12 Z" fill="#00e000"/></svg>
<svg class="a" style="left:9px;top:471px" width="7" height="8" viewBox="0 0 7 8"><path d="M0.3 0 L6 3.7 L0.3 7.4 Z" fill="#555"/></svg>
<svg class="a" style="left:21px;top:470px" width="17" height="13" viewBox="0 0 17 13"><path d="M1.5 3 V1.5 H6 L7.5 3 H13 V11.5 H1.5 Z" fill="#f6e6a8" stroke="#c8a848" stroke-width="0.8"/><path d="M3 5 H12 V10" fill="none" stroke="#fff" stroke-width="0.8"/><path d="M1 12.5 L4 6 H16 L13 12.5 Z" fill="#8cbcf4" stroke="#2a52b0" stroke-width="1"/></svg>
<svg class="a" style="left:9px;top:494px" width="7" height="8" viewBox="0 0 7 8"><path d="M0.3 0 L6 3.7 L0.3 7.4 Z" fill="#555"/></svg>
<svg class="a" style="left:21px;top:493px" width="17" height="13" viewBox="0 0 17 13"><path d="M1.5 3 V1.5 H6 L7.5 3 H13 V11.5 H1.5 Z" fill="#f6e6a8" stroke="#c8a848" stroke-width="0.8"/><path d="M3 5 H12 V10" fill="none" stroke="#fff" stroke-width="0.8"/><path d="M1 12.5 L4 6 H16 L13 12.5 Z" fill="#8cbcf4" stroke="#2a52b0" stroke-width="1"/></svg>
<svg class="a" style="left:9px;top:517px" width="7" height="8" viewBox="0 0 7 8"><path d="M0.3 0 L6 3.7 L0.3 7.4 Z" fill="#555"/></svg>
<svg class="a" style="left:21px;top:516px" width="17" height="13" viewBox="0 0 17 13"><path d="M1.5 3 V1.5 H6 L7.5 3 H13 V11.5 H1.5 Z" fill="#f6e6a8" stroke="#c8a848" stroke-width="0.8"/><path d="M3 5 H12 V10" fill="none" stroke="#fff" stroke-width="0.8"/><path d="M1 12.5 L4 6 H16 L13 12.5 Z" fill="#8cbcf4" stroke="#2a52b0" stroke-width="1"/></svg>
<svg class="a" style="left:9px;top:540px" width="7" height="8" viewBox="0 0 7 8"><path d="M0.3 0 L6 3.7 L0.3 7.4 Z" fill="#555"/></svg>
<svg class="a" style="left:21px;top:539px" width="17" height="13" viewBox="0 0 17 13"><path d="M1.5 3 V1.5 H6 L7.5 3 H13 V11.5 H1.5 Z" fill="#f6e6a8" stroke="#c8a848" stroke-width="0.8"/><path d="M3 5 H12 V10" fill="none" stroke="#fff" stroke-width="0.8"/><path d="M1 12.5 L4 6 H16 L13 12.5 Z" fill="#8cbcf4" stroke="#2a52b0" stroke-width="1"/></svg>
<svg class="a" style="left:9px;top:563px" width="7" height="8" viewBox="0 0 7 8"><path d="M0.3 0 L6 3.7 L0.3 7.4 Z" fill="#555"/></svg>
<svg class="a" style="left:21px;top:562px" width="17" height="13" viewBox="0 0 17 13"><path d="M1.5 3 V1.5 H6 L7.5 3 H13 V11.5 H1.5 Z" fill="#f6e6a8" stroke="#c8a848" stroke-width="0.8"/><path d="M3 5 H12 V10" fill="none" stroke="#fff" stroke-width="0.8"/><path d="M1 12.5 L4 6 H16 L13 12.5 Z" fill="#8cbcf4" stroke="#2a52b0" stroke-width="1"/></svg>
<svg class="a" style="left:9px;top:586px" width="7" height="8" viewBox="0 0 7 8"><path d="M0.3 0 L6 3.7 L0.3 7.4 Z" fill="#555"/></svg>
<svg class="a" style="left:21px;top:585px" width="17" height="13" viewBox="0 0 17 13"><path d="M1.5 3 V1.5 H6 L7.5 3 H13 V11.5 H1.5 Z" fill="#f6e6a8" stroke="#c8a848" stroke-width="0.8"/><path d="M3 5 H12 V10" fill="none" stroke="#fff" stroke-width="0.8"/><path d="M1 12.5 L4 6 H16 L13 12.5 Z" fill="#8cbcf4" stroke="#2a52b0" stroke-width="1"/></svg>
<svg class="a" style="left:9px;top:609px" width="7" height="8" viewBox="0 0 7 8"><path d="M0.3 0 L6 3.7 L0.3 7.4 Z" fill="#555"/></svg>
<svg class="a" style="left:21px;top:608px" width="17" height="13" viewBox="0 0 17 13"><path d="M1.5 3 V1.5 H6 L7.5 3 H13 V11.5 H1.5 Z" fill="#f6e6a8" stroke="#c8a848" stroke-width="0.8"/><path d="M3 5 H12 V10" fill="none" stroke="#fff" stroke-width="0.8"/><path d="M1 12.5 L4 6 H16 L13 12.5 Z" fill="#8cbcf4" stroke="#2a52b0" stroke-width="1"/></svg>
<div class="a" style="left:8px;top:643px;width:1px;height:26px;background:#fff"></div>
<div class="a" style="left:9px;top:643px;width:1px;height:26px;background:#b9ad9f"></div>
<svg class="a" style="left:22px;top:649px" width="15" height="14" viewBox="0 0 15 14"><rect x="0.5" y="1.5" width="6" height="12" fill="#e6f6fc" stroke="#8a8060"/><rect x="0" y="1" width="7" height="2.5" fill="#3a78c8"/><path d="M10.5 0 L11.4 2.2 L13.6 3 L11.4 3.8 L10.5 6 L9.6 3.8 L7.4 3 L9.6 2.2 Z" fill="#fff3a0" stroke="#b88a10" stroke-width="0.8"/></svg>
<div class="a" style="left:547px;top:643px;width:1px;height:26px;background:#fff"></div>
<div class="a" style="left:548px;top:643px;width:1px;height:26px;background:#b9ad9f"></div>
<div class="t" style="left:238.50px;top:7.00px;font-size:15px;font-weight:bold;color:#ecebe6;letter-spacing:-0.068px;">ProB - tutorial_prob/mac.bum - Rodin Platform</div>
<div class="t" style="left:9.50px;top:36.00px;font-size:13px;font-weight:normal;color:#4a4a4a;letter-spacing:-0.333px;">File</div>
<div class="t" style="left:43.50px;top:36.00px;font-size:13px;font-weight:normal;color:#4a4a4a;letter-spacing:0.667px;">Edit</div>
<div class="t" style="left:81.50px;top:36.00px;font-size:13px;font-weight:normal;color:#4a4a4a;letter-spacing:1.429px;">Navigate</div>
<div class="t" style="left:156.50px;top:36.00px;font-size:13px;font-weight:normal;color:#4a4a4a;letter-spacing:1.200px;">Search</div>
<div class="t" style="left:216.50px;top:36.00px;font-size:13px;font-weight:normal;color:#4a4a4a;letter-spacing:1.167px;">Project</div>
<div class="t" style="left:277.50px;top:36.00px;font-size:13px;font-weight:normal;color:#4a4a4a;letter-spacing:1.000px;">Run</div>
<div class="t" style="left:315.50px;top:36.00px;font-size:13px;font-weight:normal;color:#4a4a4a;letter-spacing:0.333px;">ProB</div>
<div class="t" style="left:359.50px;top:36.00px;font-size:13px;font-weight:normal;color:#4a4a4a;letter-spacing:1.400px;">Window</div>
<div class="t" style="left:425.50px;top:36.00px;font-size:13px;font-weight:normal;color:#4a4a4a;letter-spacing:1.667px;">Help</div>
<div class="t" style="left:28.50px;top:105.50px;font-size:13.5px;font-weight:normal;color:#4a4a4a;letter-spacing:0.200px;">Events</div>
<div class="t" style="left:14.10px;top:139.00px;font-size:13.5px;font-weight:normal;color:#4a4a4a;letter-spacing:0.840px;">Checks</div>
<div class="t" style="left:14.10px;top:170.00px;font-size:13.5px;font-weight:normal;color:#4a4a4a;letter-spacing:0.075px;">Event</div>
<div class="a" style="left:127px;top:165px;width:58px;height:22px;overflow:hidden"><div class="a" style="left:-127px;top:-165px"><div class="t" style="left:130.50px;top:170.00px;font-size:13.5px;font-weight:normal;color:#4a4a4a;">Parameter</div></div></div>
<div class="t" style="left:30.70px;top:193.50px;font-size:13.5px;font-weight:normal;color:#4a4a4a;letter-spacing:0.580px;">set_peds_go</div>
<div class="a" style="left:27px;top:212px;width:97px;height:21px;overflow:hidden"><div class="a" style="left:-27px;top:-212px"><div class="t" style="left:30.70px;top:216.50px;font-size:13.5px;font-weight:normal;color:#4a4a4a;letter-spacing:0.483px;">set_peds_stop</div></div></div>
<div class="t" style="left:30.70px;top:239.50px;font-size:13.5px;font-weight:normal;color:#4a4a4a;letter-spacing:0.183px;">set_cars (×2)</div>
<div class="t" style="left:132.00px;top:239.50px;font-size:13.5px;font-weight:normal;color:#4a4a4a;transform:scaleX(0.8333);transform-origin:0 0;">TRUE</div>
<div class="t" style="left:29.10px;top:379.00px;font-size:13.5px;font-weight:normal;color:#4a4a4a;letter-spacing:-1.600px;">Ev</div>
<div class="t" style="left:110.90px;top:379.00px;font-size:13.5px;font-weight:normal;color:#4a4a4a;letter-spacing:-0.200px;">Ro</div>
<div class="a" style="left:8px;top:464px;width:163px;height:156px;overflow:hidden"><div class="a" style="left:-8px;top:-464px"><div class="t" style="left:40.90px;top:470.30px;font-size:13.5px;font-weight:normal;color:#4a4a4a;letter-spacing:1.260px;">Agatha</div></div></div>
<div class="a" style="left:8px;top:464px;width:163px;height:156px;overflow:hidden"><div class="a" style="left:-8px;top:-464px"><div class="t" style="left:39.90px;top:493.30px;font-size:13.5px;font-weight:normal;color:#4a4a4a;letter-spacing:0.592px;">CruiseControl</div></div></div>
<div class="a" style="left:8px;top:464px;width:163px;height:156px;overflow:hidden"><div class="a" style="left:-8px;top:-464px"><div class="t" style="left:39.90px;top:516.30px;font-size:13.5px;font-weight:normal;color:#4a4a4a;letter-spacing:0.900px;">Paper</div></div></div>
<div class="a" style="left:8px;top:464px;width:163px;height:156px;overflow:hidden"><div class="a" style="left:-8px;top:-464px"><div class="t" style="left:39.90px;top:539.30px;font-size:13.5px;font-weight:normal;color:#4a4a4a;letter-spacing:-0.086px;">Paper-TL</div></div></div>
<div class="a" style="left:8px;top:464px;width:163px;height:156px;overflow:hidden"><div class="a" style="left:-8px;top:-464px"><div class="t" style="left:39.90px;top:562.00px;font-size:13.5px;font-weight:normal;color:#4a4a4a;letter-spacing:0.850px;">Sandbox</div></div></div>
<div class="a" style="left:8px;top:464px;width:163px;height:156px;overflow:hidden"><div class="a" style="left:-8px;top:-464px"><div class="t" style="left:40.90px;top:585.00px;font-size:13.5px;font-weight:normal;color:#4a4a4a;letter-spacing:0.600px;">Traceability</div></div></div>
<div class="a" style="left:8px;top:464px;width:163px;height:156px;overflow:hidden"><div class="a" style="left:-8px;top:-464px"><div class="t" style="left:40.90px;top:608.00px;font-size:13.5px;font-weight:normal;color:#4a4a4a;letter-spacing:0.327px;">Trafficlight</div></div></div>
<div class="t" style="left:216.70px;top:106.00px;font-size:13.5px;font-weight:normal;color:#4a4a4a;letter-spacing:1.000px;">State</div>
<div class="t" style="left:206.90px;top:142.00px;font-size:13.5px;font-weight:normal;color:#4a4a4a;letter-spacing:1.500px;">Name</div>
<div class="t" style="left:582.30px;top:141.50px;font-size:13.5px;font-weight:normal;color:#4a4a4a;letter-spacing:0.725px;">Value</div>
<div class="t" style="left:200.50px;top:592.00px;font-size:16px;font-weight:bold;color:#4d4d4d;letter-spacing:0.294px;">invariant violated!</div>
<div class="t" style="left:422.50px;top:594.00px;font-size:14.5px;font-weight:normal;color:#4d4d4d;letter-spacing:0.435px;">no event errors detected</div>
<div class="t" style="left:675.00px;top:105.60px;font-size:13.5px;font-weight:normal;color:#4a4a4a;letter-spacing:0.125px;">Histo</div>
<div class="t" style="left:773.00px;top:105.60px;font-size:13.5px;font-weight:normal;color:#4a4a4a;letter-spacing:0.167px;">Even</div>
<div class="t" style="left:657.96px;top:136.00px;font-size:13.5px;font-weight:normal;color:#4a4a4a;transform:scaleX(1.2417);transform-origin:0 0;">mac</div>
<div class="t" style="left:660.00px;top:157.00px;font-size:15px;font-weight:bold;color:#333;letter-spacing:0.180px;">set_peds_go</div>
<div class="t" style="left:659.50px;top:182.80px;font-size:13.5px;font-weight:normal;color:#4a4a4a;letter-spacing:0.400px;">set_cars</div>
<div class="t" style="left:659.06px;top:205.50px;font-size:13.5px;font-weight:normal;color:#4a4a4a;transform:scaleX(0.9381);transform-origin:0 0;">INITIALISATION</div>
<div class="t" style="left:660.00px;top:228.30px;font-size:13.5px;font-weight:normal;color:#4a4a4a;letter-spacing:0.500px;">(uninitialised state)</div>
<div class="t" style="left:635.00px;top:69.50px;font-size:13.5px;font-weight:normal;color:#4a4a4a;letter-spacing:0.417px;">Proving</div>
<div class="t" style="left:711.50px;top:69.50px;font-size:13.5px;font-weight:normal;color:#4a4a4a;">ProB</div>
<div class="t" style="left:767.50px;top:69.50px;font-size:13.5px;font-weight:normal;color:#4a4a4a;letter-spacing:0.167px;">Event-B</div>
<div class="t" style="left:235.20px;top:164.60px;font-size:15px;font-weight:bold;color:#111;font-family:'Liberation Mono';letter-spacing:-0.100px;">mac</div>
<div class="t" style="left:245.80px;top:188.50px;font-size:13.5px;font-weight:normal;color:#111;font-family:'Liberation Mono';letter-spacing:-0.033px;-webkit-text-stroke:0.35px #111;">cars_go</div>
<div class="t" style="left:245.20px;top:210.00px;font-size:15px;font-weight:bold;color:#111;font-family:'Liberation Mono';letter-spacing:0.183px;">peds_go</div>
<div class="t" style="left:234.60px;top:234.40px;font-size:13.5px;font-weight:normal;color:#111;font-family:'Liberation Mono';letter-spacing:-0.086px;-webkit-text-stroke:0.35px #111;">Formulas</div>
<div class="t" style="left:245.80px;top:256.70px;font-size:15px;font-weight:bold;color:#ee0000;font-family:'Liberation Mono';letter-spacing:0.056px;">invariants</div>
<div class="t" style="left:256.00px;top:279.50px;font-size:15px;font-weight:bold;color:#ee0000;font-family:'Liberation Mono';letter-spacing:0.133px;">¬(cars_go = TRUE <span style="display:inline-block;width:9.133px;height:1em;position:relative;vertical-align:top"><svg style="position:absolute;left:0;top:0" width="9.13" height="13" viewBox="0 0 9.13 13"><path d="M1.37 11.00 L4.57 3.05 L7.76 11.00" fill="none" stroke="#ee0000" stroke-width="2"/></svg></span> peds_go = TRUE)</div>
<div class="t" style="left:267.30px;top:302.20px;font-size:15px;font-weight:bold;color:#118811;font-family:'Liberation Mono';letter-spacing:0.090px;">cars_go = TRUE <span style="display:inline-block;width:9.090px;height:1em;position:relative;vertical-align:top"><svg style="position:absolute;left:0;top:0" width="9.09" height="13" viewBox="0 0 9.09 13"><path d="M1.36 11.00 L4.54 3.05 L7.73 11.00" fill="none" stroke="#118811" stroke-width="2"/></svg></span> peds_go = TRUE</div>
<div class="t" style="left:278.70px;top:326.00px;font-size:13.5px;font-weight:normal;color:#118811;font-family:'Liberation Mono';letter-spacing:-0.115px;-webkit-text-stroke:0.35px #118811;">cars_go = TRUE</div>
<div class="t" style="left:290.00px;top:349.70px;font-size:13.5px;font-weight:normal;color:#111;font-family:'Liberation Mono';letter-spacing:-0.100px;-webkit-text-stroke:0.35px #111;">cars_go</div>
<div class="t" style="left:278.70px;top:372.00px;font-size:15px;font-weight:bold;color:#118811;font-family:'Liberation Mono';letter-spacing:0.015px;">peds_go = TRUE</div>
<div class="t" style="left:289.60px;top:394.70px;font-size:15px;font-weight:bold;color:#111;font-family:'Liberation Mono';letter-spacing:0.067px;">peds_go</div>
<div class="t" style="left:245.30px;top:418.50px;font-size:13.5px;font-weight:normal;color:#111;font-family:'Liberation Mono';letter-spacing:-0.060px;-webkit-text-stroke:0.35px #111;">guards</div>
<div class="t" style="left:586.80px;top:189.00px;font-size:13.5px;font-weight:normal;color:#111;font-family:'Liberation Mono';letter-spacing:-0.467px;-webkit-text-stroke:0.2px #111;">TRUE</div>
<div class="t" style="left:581.20px;top:210.70px;font-size:15px;font-weight:bold;color:#111;font-family:'Liberation Mono';letter-spacing:-0.333px;">TRUE</div>
<div class="t" style="left:586.80px;top:350.00px;font-size:13.5px;font-weight:normal;color:#111;font-family:'Liberation Mono';letter-spacing:-0.467px;-webkit-text-stroke:0.2px #111;">TRUE</div>
<div class="t" style="left:581.20px;top:394.70px;font-size:15px;font-weight:bold;color:#111;font-family:'Liberation Mono';letter-spacing:-0.333px;">TRUE</div>

</body></html>
